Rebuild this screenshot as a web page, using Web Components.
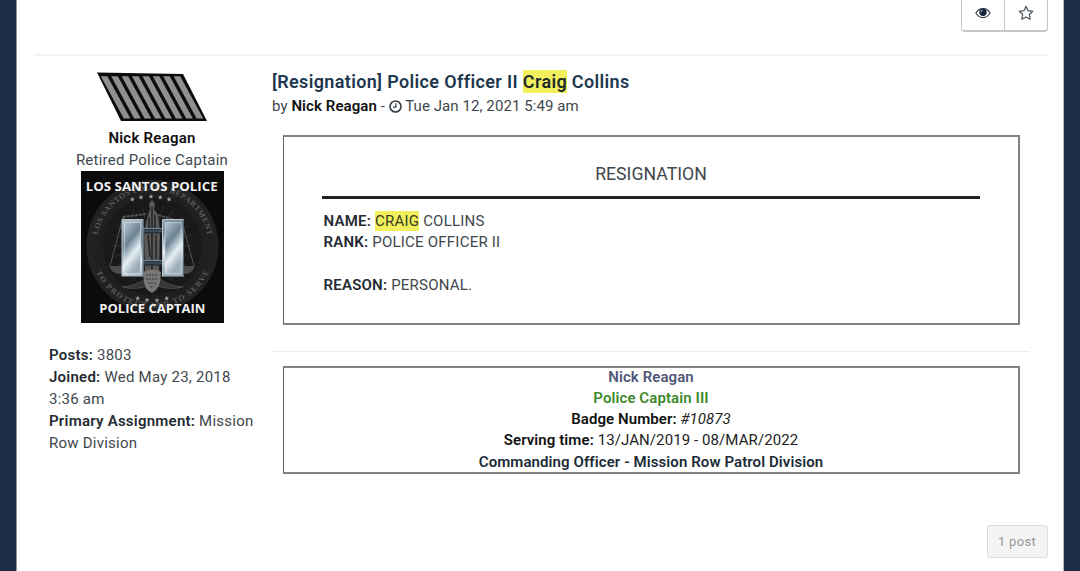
<!DOCTYPE html>
<html lang="en">
<head>
<meta charset="utf-8">
<title>[Resignation] Police Officer II Craig Collins</title>
<style>
  html, body { height: 100%; }
  body {
    margin: 0;
    overflow: hidden;
    background: #1c2c44;
    font-family: Roboto, "Liberation Sans", sans-serif;
    font-size: 15px;
    color: #40474d;
  }
  b { font-weight: 600; color: #252b33; }
  b.dark { color: #111; }
  mark { background: #f1f05c; color: #3a3b20; padding: 1px 0; }
  .title mark { color: #1d2b2c; }
</style>
</head>
<body>

<forum-page>
  <topic-actions slot="actions"></topic-actions>

  <forum-post>
    <post-profile slot="profile" name="Nick Reagan" rank="Retired Police Captain">
      <profile-field label="Posts:">3803</profile-field>
      <profile-field label="Joined:">Wed May 23, 2018 3:36 am</profile-field>
      <profile-field label="Primary Assignment:">Mission Row Division</profile-field>
    </post-profile>

    <span slot="title" class="title">[Resignation] Police Officer II <mark>Craig</mark> Collins</span>
    <post-byline slot="byline" author="Nick Reagan">Tue Jan 12, 2021 5:49 am</post-byline>

    <resignation-form heading="RESIGNATION">
      <div><b>NAME:</b> <mark>CRAIG</mark> COLLINS</div>
      <div><b>RANK:</b> POLICE OFFICER II</div>
      <div>&nbsp;</div>
      <div><b>REASON:</b> PERSONAL.</div>
    </resignation-form>

    <post-signature slot="signature">
      <span slot="name">Nick Reagan</span>
      <span slot="rank">Police Captain III</span>
      <span slot="badge"><b class="dark">Badge Number:</b> <i>#10873</i></span>
      <span slot="time"><b class="dark">Serving time:</b> 13/JAN/2019 - 08/MAR/2022</span>
      <span slot="post">Commanding Officer - Mission Row Patrol Division</span>
    </post-signature>
  </forum-post>

  <post-count slot="footer">1 post</post-count>
</forum-page>

<script>
/**
 * Base element: renders the static template of the class in an open shadow root.
 */
class ForumElement extends HTMLElement {

  static template = '';

  constructor() {
    super();
    const shadowRoot = this.attachShadow({mode: 'open'});
    shadowRoot.innerHTML = this.constructor.template;
  }

  // COPY ATTRIBUTES INTO [data-text] NODES //
  connectedCallback() {
    this.shadowRoot.querySelectorAll('[data-text]').forEach(node => {
      node.textContent = this.getAttribute(node.dataset.text);
    });
  }

}

/**
 * Page container
 */
class ForumPage extends ForumElement {
  static template = `
    <style>
      :host {
        display: flex;
        flex-direction: column;
        box-sizing: border-box;
        height: 100%;
        margin: 0 16.5px 0 16px;
        padding: 0 15px 0 17px;
        background: #fff;
        border-left: 1px solid #8b98a3;
        border-right: 1px solid #b5bcc3;
      }
      header {
        display: flex;
        justify-content: flex-end;
        height: 54px;
        border-bottom: 2px solid #f3f3f3;
      }
      main { height: 469px; }
      footer { display: flex; justify-content: flex-end; }
    </style>
    <header><slot name="actions"></slot></header>
    <main><slot></slot></main>
    <footer><slot name="footer"></slot></footer>
  `;
}
customElements.define('forum-page', ForumPage);

/**
 * Watch and bookmark buttons
 */
class TopicActions extends ForumElement {
  static template = `
    <style>
      :host {
        display: flex;
        box-sizing: border-box;
        width: 87px;
        height: 32px;
        border: 1px solid #c5c7c9;
        border-top: 0;
        border-bottom-width: 2px;
        border-radius: 0 0 4px 4px;
      }
      button {
        flex: 1;
        padding: 0 0 4px 1px;
        border: 0;
        background: none;
        display: flex;
        align-items: center;
        justify-content: center;
      }
      button + button { border-left: 1.5px solid #c5c7c9; }
      svg { display: block; }
    </style>
    <button aria-label="Watch">
      <svg width="16" height="12" viewBox="0 0 16 12">
        <path d="M.8 6.1C2.4 3.3 5 1.6 8 1.6s5.600 1.700 7.200 4.500C13.600 8.900 11 10.600 8 10.600S2.400 8.900.8 6.100z" fill="#fff" stroke="#34404b" stroke-width="1.1"/>
        <circle cx="8" cy="5.300" r="3.700" fill="#14253c"/>
        <path d="M5.900 5.200A2.100 2.100 0 0 1 7.800 3.100" fill="none" stroke="#e5eaf0" stroke-width=".8"/>
      </svg>
    </button>
    <button aria-label="Bookmark">
      <svg width="16" height="16" viewBox="0 0 15 15">
        <path d="M7.500 1.300 9.400 5.300 13.800 5.900 10.600 8.900 11.400 13.300 7.500 11.200 3.600 13.300 4.400 8.900 1.200 5.900 5.600 5.300z" fill="none" stroke="#4c555e" stroke-width="1.150" stroke-linejoin="round"/>
      </svg>
    </button>
  `;
}
customElements.define('topic-actions', TopicActions);

/**
 * Post with profile column and body column
 */
class ForumPost extends ForumElement {
  static template = `
    <style>
      :host {
        display: grid;
        grid-template-columns: 223px 758px;
        padding: 15px 0 0 15px;
      }
      h3 {
        margin: -1px 0 2px;
        font-size: 18px;
        line-height: 24px;
        font-weight: 600;
        color: #20374d;
        letter-spacing: .35px;
        white-space: nowrap;
      }
      .signature {
        margin-top: 26px;
        padding-top: 14px;
        border-top: 1px solid #ececec;
      }
    </style>
    <slot name="profile"></slot>
    <div>
      <h3><slot name="title"></slot></h3>
      <slot name="byline"></slot>
      <slot></slot>
      <div class="signature"><slot name="signature"></slot></div>
    </div>
  `;
}
customElements.define('forum-post', ForumPost);

/**
 * Service stripes, eight slanted bars
 */
class ServiceStripes extends ForumElement {
  static template = `
    <style>
      :host { display: block; }
      svg { display: block; margin: 0 auto; }
    </style>
    <svg width="112" height="50" viewBox="0 0 112 50">
      <path d="M1 .5 87 2 111 49H25z" fill="#0c0c0c"/>
      <g class="bars" fill="#8f8f8f"></g>
    </svg>
  `;

  connectedCallback() {
    const bars = Array.from({length: 8}, (_, i) => {
      const x = 4.800 + i * 10.400;
      return `<path d="M${ x } 4.200h6.600L${ x + 29.600 } 46.500h-6.600z"/>`;
    });
    this.shadowRoot.querySelector('.bars').innerHTML = bars.join('');
  }
}
customElements.define('service-stripes', ServiceStripes);

/**
 * Captain avatar: department seal with rank bars
 */
class CaptainAvatar extends ForumElement {
  static template = `
    <style>
      :host { display: block; letter-spacing: 0; }
      svg { display: block; margin: 0 auto; }
      .ring { font: 700 8px "Liberation Serif", serif; fill: #5c5c5c; }
      .label { font: 700 12.500px "Open Sans", "Noto Sans", sans-serif; fill: #f1f1f1; }
    </style>
    <svg width="143" height="152" viewBox="0 0 143 152">
      <defs>
        <radialGradient id="seal"><stop stop-color="#303030"/><stop offset=".7" stop-color="#1e1e1e"/><stop offset="1" stop-color="#222"/></radialGradient>
        <linearGradient id="steel" x1="0" y1="0" x2=".4" y2="1">
          <stop stop-color="#b4c4ce"/><stop offset=".2" stop-color="#93a7b4"/><stop offset=".42" stop-color="#6c8292"/>
          <stop offset=".56" stop-color="#a4b7c3"/><stop offset=".72" stop-color="#e6eff4"/><stop offset="1" stop-color="#9badb9"/>
        </linearGradient>
        <path id="arcTop" d="M15.500 75A56 56 0 0 1 127.500 75"/>
        <path id="arcBottom" d="M9.500 75A62 62 0 0 0 133.500 75"/>
      </defs>
      <rect width="143" height="152" fill="#0b0b0b"/>
      <circle cx="71.500" cy="75" r="66" fill="url(#seal)"/>
      <circle cx="71.500" cy="75" r="49" fill="#191919"/>
      <g class="rays" stroke="#272727" stroke-width="1.500"></g>
      <text class="ring"><textPath href="#arcTop" startOffset="11" textLength="154">LOS SANTOS POLICE DEPARTMENT</textPath></text>
      <text class="ring"><textPath href="#arcBottom" startOffset="27" textLength="141">TO PROTECT AND TO SERVE</textPath></text>

      <!-- statue and scales -->
      <path d="M67 44 69 38 68 33 71 29 74 33 73 38 77 44 79 60 78 105H64L63 60z" fill="#595959"/>
      <path d="M68 46v13M74 44v16M67 64l2 22M75 64v24M71 36v66" stroke="#242424" stroke-width="1.500"/>
      <path d="M42 46 65 43M77 44 101 51" stroke="#555" stroke-width="2" stroke-dasharray="3 1"/>
      <path d="M42 46 29 95M42 46 49 95M101 51 94 95M101 51 113 95" fill="none" stroke="#565656"/>
      <path d="M28 95h22q-3 8-11 8t-11-8zM93 95h21q-3 8-10 8t-11-8z" fill="#4c4c4c"/>
      <path d="M41 116q14-1 25-9l5 6q-14 7-30 3zM102 116q-14-1-25-9l-5 6q14 7 30 3z" fill="#353535" stroke="#4a4a4a"/>
      <path d="M62 101q9-5 18 0l-1 10q-2 8-8 11-7-3-8-11z" fill="#777"/>
      <path d="M65 104h12M65 108h12M67 112h8M69 116h4" stroke="#3b3b3b" stroke-dasharray="2 1"/>
      <g class="stars" fill="#a0a0a0"></g>

      <!-- captain bars -->
      <path d="M61 58h22v4H61zM61 90h22v4H61z" fill="#3c4a55" stroke="#17212a"/>
      <path d="M62 57.500h20M62 89.500h20" stroke="#768894"/>
      <g fill="url(#steel)" stroke="#b4c3cc" stroke-width="1">
        <path d="M41 48.500h21v57H41zM81.500 48.500h21v57h-21z"/>
      </g>
      <path d="M43.500 51.500h16v51h-16z" fill="url(#steel)" stroke="#dfe9ee" stroke-opacity=".5"/>
      <path d="M84 51.500h16v51H84z" fill="url(#steel)" stroke="#dfe9ee" stroke-opacity=".5"/>
      <path d="M62 49v56.500H41M102.500 49v56.500h-21" fill="none" stroke="#566773"/>

      <text class="label" x="4.700" y="20" textLength="132" lengthAdjust="spacingAndGlyphs">LOS SANTOS POLICE</text>
      <text class="label" x="18.300" y="142" textLength="106" lengthAdjust="spacingAndGlyphs">POLICE CAPTAIN</text>
    </svg>
  `;

  connectedCallback() {
    const stars = [
      [51.3, 28.3], [60, 26.3], [70, 25.6], [79.3, 26.3], [88, 28.3],
      [56.7, 127.3], [66, 129], [76, 129.3], [85.7, 127.3]
    ];
    this.shadowRoot.querySelector('.stars').innerHTML = stars.map(([x, y]) => {
      return `<path transform="translate(${ x } ${ y })" d="M0-2.500.7-.8 2.400-.7 1.100.4 1.500 2.100 0 1.200-1.500 2.100-1.100.4-2.400-.7-.7-.8z"/>`;
    }).join('');

    this.shadowRoot.querySelector('.rays').innerHTML = Array.from({length: 24}, (_, i) => {
      return `<path transform="rotate(${ i * 15 } 71.500 75)" d="M71.500 51V34"/>`;
    }).join('');
  }
}
customElements.define('captain-avatar', CaptainAvatar);

/**
 * Profile column
 */
class PostProfile extends ForumElement {
  static template = `
    <style>
      :host { display: block; width: 206px; line-height: 22px; letter-spacing: .24px; }
      .author { text-align: center; }
      service-stripes { margin: 1px 0 5px; }
      captain-avatar { margin-bottom: 21px; }
      strong { display: block; font-weight: 600; color: #111; }
      .rank { display: block; }
    </style>
    <div class="author">
      <service-stripes></service-stripes>
      <strong data-text="name"></strong>
      <span class="rank" data-text="rank"></span>
      <captain-avatar></captain-avatar>
    </div>
    <slot></slot>
  `;
}
customElements.define('post-profile', PostProfile);

class ProfileField extends ForumElement {
  static template = `
    <style>
      :host { display: block; }
      b { font-weight: 600; color: #252b33; }
    </style>
    <b data-text="label"></b> <slot></slot>
  `;
}
customElements.define('profile-field', ProfileField);

/**
 * Author and date line
 */
class PostByline extends ForumElement {
  static template = `
    <style>
      :host { display: block; line-height: 20px; margin-bottom: 19px; letter-spacing: .08px; white-space: nowrap; }
      b { font-weight: 600; color: #111; }
      svg { vertical-align: -1.500px; }
    </style>
    by <b data-text="author"></b> -
    <svg width="13" height="13" viewBox="0 0 13 13">
      <circle cx="6.500" cy="6.500" r="5.500" fill="none" stroke="#353d45" stroke-width="1.600"/>
      <path d="M6.900 3.200v4H4" fill="none" stroke="#353d45" stroke-width="1.200"/>
    </svg>
    <slot></slot>
  `;
}
customElements.define('post-byline', PostByline);

/**
 * Bordered form in the post body
 */
class ResignationForm extends ForumElement {
  static template = `
    <style>
      :host {
        display: block;
        box-sizing: border-box;
        height: 190px;
        margin: 0 10px 0 11px;
        padding: 25px 38px 0;
        border: 2px solid #808284;
        border-left: 1px solid #5f6163;
        line-height: 21.400px;
      }
      h4 {
        margin: 0;
        padding-bottom: 10px;
        border-bottom: 3px solid #222;
        text-align: center;
        font-size: 17.700px;
        font-weight: 400;
        line-height: 24px;
      }
      .fields { padding: 12px 0 0 1.500px; letter-spacing: .22px; }
    </style>
    <h4 data-text="heading"></h4>
    <div class="fields"><slot></slot></div>
  `;
}
customElements.define('resignation-form', ResignationForm);

/**
 * Signature box
 */
class PostSignature extends ForumElement {
  static template = `
    <style>
      :host {
        display: block;
        box-sizing: border-box;
        height: 108px;
        margin: 0 10px 0 11px;
        border: 2px solid #808284;
        border-left: 1px solid #5f6163;
        text-align: center;
        line-height: 21px;
        letter-spacing: .09px;
        color: #222;
      }
      .name { margin-top: -1px; font-weight: 600; color: #515777; }
      .rank { font-weight: 600; color: #3c8a2b; }
      .post { font-weight: 600; line-height: 23px; color: #202b36; }
    </style>
    <div class="name"><slot name="name"></slot></div>
    <div class="rank"><slot name="rank"></slot></div>
    <div><slot name="badge"></slot></div>
    <div><slot name="time"></slot></div>
    <div class="post"><slot name="post"></slot></div>
  `;
}
customElements.define('post-signature', PostSignature);

/**
 * Post count
 */
class PostCount extends ForumElement {
  static template = `
    <style>
      :host {
        display: block;
        box-sizing: border-box;
        width: 61px;
        height: 33px;
        border: 1px solid #dcdcdc;
        border-radius: 3px;
        background: #f4f4f4;
        color: #999;
        font-size: 13px;
        letter-spacing: .3px;
        line-height: 32px;
        text-align: center;
      }
    </style>
    <slot></slot>
  `;
}
customElements.define('post-count', PostCount);
</script>
</body>
</html>
